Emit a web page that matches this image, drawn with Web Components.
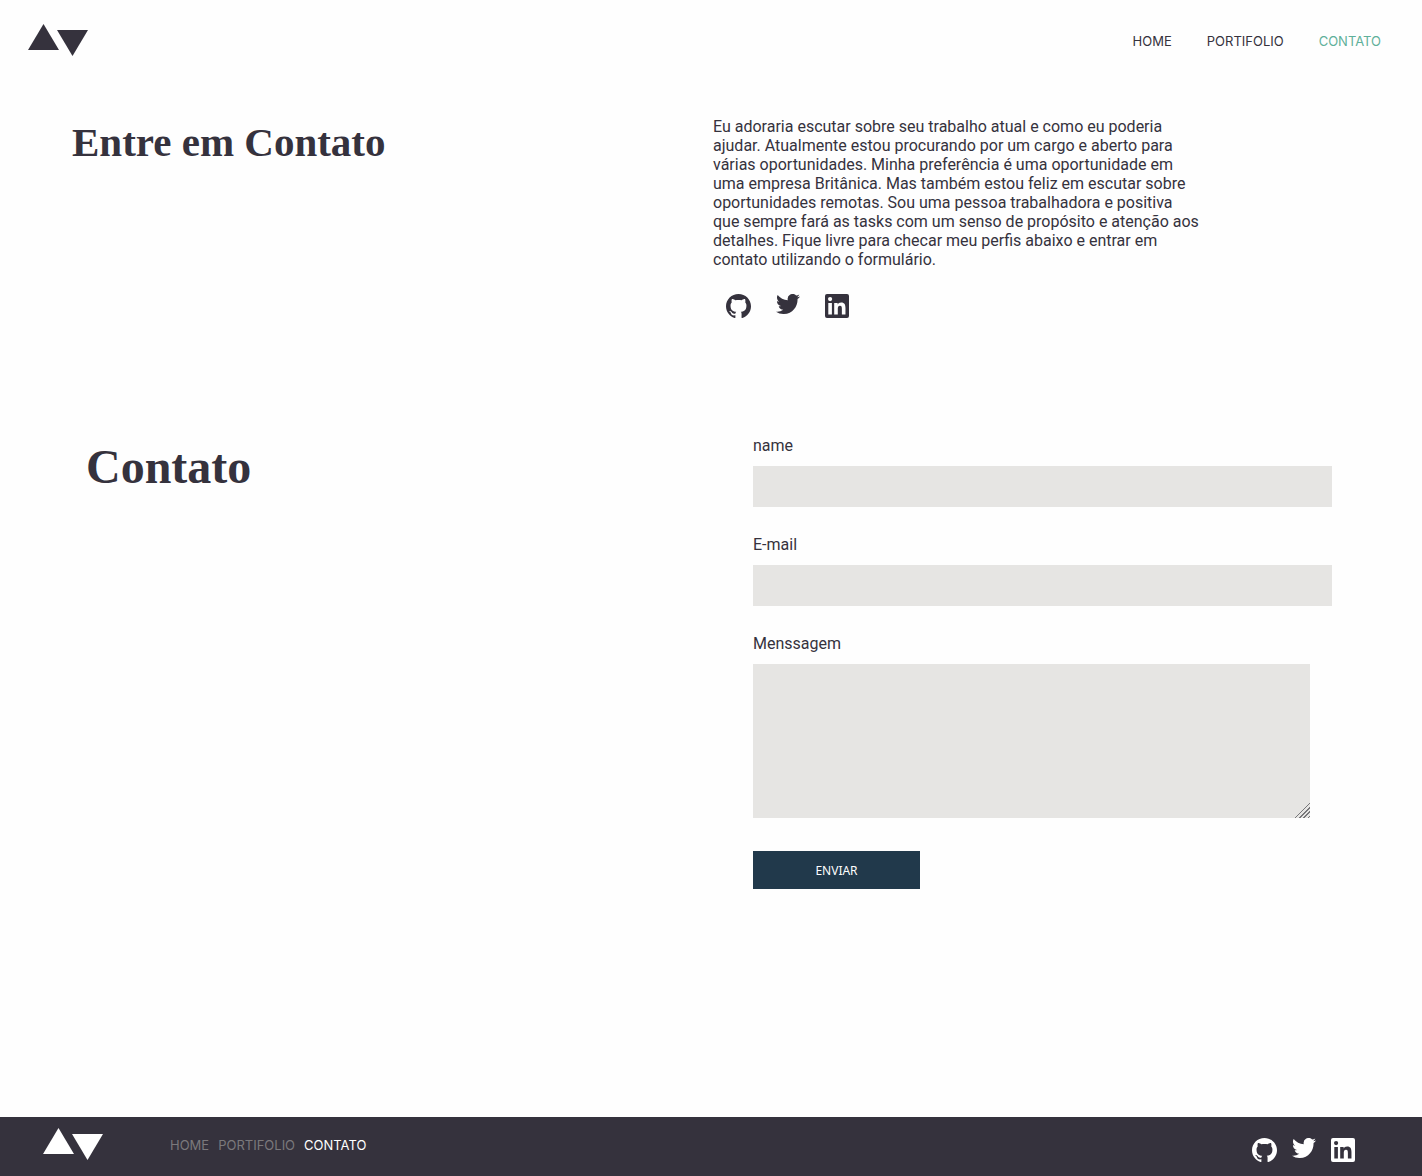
<!DOCTYPE html>
<html lang="pt-BR">
<head>
<meta charset="utf-8">
<meta name="viewport" content="width=device-width, initial-scale=1">
<title>Contato</title>
<style>
  :root {
    --ink: #35323d;
    --paper: #fefefe;
    --accent: #5fb09a;
    --field: #e6e5e3;
    --button: #21394b;
    --muted: #7b797c;
    --sans: Roboto, "Liberation Sans", sans-serif;
    --caps: Inter, "Liberation Sans", sans-serif;
    --serif: "Liberation Serif", serif;
  }
  body {
    margin: 0;
    background: var(--paper);
    color: var(--ink);
    font: 16px/19px var(--sans);
  }
</style>
</head>
<body>
<contact-page></contact-page>

<script>
  const define = (name, html, setup) => {
    const template = document.createElement('template');
    template.innerHTML = html;
    customElements.define(name, class extends HTMLElement {
      constructor() {
        super();
        this.attachShadow({ mode: 'open' }).append(template.content.cloneNode(true));
      }
      connectedCallback() {
        if (setup) setup(this, this.shadowRoot);
      }
    });
  };

  define('brand-logo', `
    <style>
      :host { display: block; }
      a { display: block; color: inherit; }
      svg { display: block; }
    </style>
    <a href="#" aria-label="Início">
      <svg width="60" height="32" viewBox="0 0 60 32" fill="currentColor" aria-hidden="true">
        <path d="M15.500 0 31 26H0z"/><path d="M29 6h31L44.500 32z"/>
      </svg>
    </a>`);

  define('nav-link', `
    <style>
      :host { display: block; }
      a { color: inherit; text-decoration: none; font: 13px/19px var(--caps); }
    </style>
    <a><slot></slot></a>`, (host, root) => {
      root.querySelector('a').href = host.getAttribute('href');
    });

  define('social-links', `
    <style>
      :host { display: block; }
      ul { display: flex; align-items: flex-start; gap: var(--social-gap, 25px); margin: 0; padding: 0; list-style: none; }
      a { display: block; color: inherit; }
      svg { display: block; }
    </style>
    <ul>
      <li><a href="#github" aria-label="GitHub">
        <svg width="25" height="24" viewBox="0 0.297 24 23.407" preserveAspectRatio="none" fill="currentColor" aria-hidden="true"><path d="M12 .297c-6.630 0-12 5.373-12 12 0 5.303 3.438 9.800 8.205 11.385.6.113.82-.258.82-.577 0-.285-.01-1.040-.015-2.040-3.338.724-4.042-1.610-4.042-1.610C4.422 18.070 3.633 17.700 3.633 17.700c-1.087-.744.084-.729.084-.729 1.205.084 1.838 1.236 1.838 1.236 1.070 1.835 2.809 1.305 3.495.998.108-.776.417-1.305.76-1.605-2.665-.3-5.466-1.332-5.466-5.930 0-1.310.465-2.380 1.235-3.220-.135-.303-.54-1.523.105-3.176 0 0 1.005-.322 3.300 1.230.96-.267 1.980-.399 3-.405 1.020.006 2.040.138 3 .405 2.280-1.552 3.285-1.230 3.285-1.230.645 1.653.24 2.873.12 3.176.765.84 1.230 1.910 1.230 3.220 0 4.610-2.805 5.625-5.475 5.920.42.36.81 1.096.81 2.220 0 1.606-.015 2.896-.015 3.286 0 .315.21.69.825.57C20.565 22.092 24 17.592 24 12.297c0-6.627-5.373-12-12-12"/></svg>
      </a></li>
      <li><a href="#twitter" aria-label="Twitter">
        <svg width="24" height="20" viewBox="0 2.250 24 19.500" preserveAspectRatio="none" fill="currentColor" aria-hidden="true"><path d="M23.953 4.570a10 10 0 01-2.825.775 4.958 4.958 0 002.163-2.723c-.951.555-2.005.959-3.127 1.184a4.920 4.920 0 00-8.384 4.482C7.690 8.095 4.067 6.130 1.640 3.162a4.822 4.822 0 00-.666 2.475c0 1.710.87 3.213 2.188 4.096a4.904 4.904 0 01-2.228-.616v.06a4.923 4.923 0 003.946 4.827 4.996 4.996 0 01-2.212.085 4.936 4.936 0 004.604 3.417 9.867 9.867 0 01-6.102 2.105c-.39 0-.779-.023-1.170-.067a13.995 13.995 0 007.557 2.209c9.053 0 13.998-7.496 13.998-13.985 0-.21 0-.42-.015-.63A9.935 9.935 0 0024 4.590z"/></svg>
      </a></li>
      <li><a href="#linkedin" aria-label="LinkedIn">
        <svg width="24" height="24" viewBox="0 0 24 24" fill="currentColor" aria-hidden="true"><path fill-rule="evenodd" d="M2 0h20a2 2 0 0 1 2 2v20a2 2 0 0 1-2 2H2a2 2 0 0 1-2-2V2a2 2 0 0 1 2-2zM3.300 8.900v11.700h3.600V8.900zM5.100 3a2.100 2.100 0 1 0 0 4.200 2.100 2.100 0 0 0 0-4.200zM9.200 8.900v11.700h3.600v-5.800c0-1.530.3-3 2.180-3 1.870 0 1.890 1.730 1.890 3.100v5.700h3.600v-6.420c0-3.150-.68-5.580-4.350-5.580-1.770 0-2.950.97-3.430 1.890h-.05V8.900z"/></svg>
      </a></li>
    </ul>`);

  define('site-header', `
    <style>
      :host { display: block; }
      header { display: flex; justify-content: space-between; align-items: center; padding: 24px 41px 24px 28px; }
      nav { display: flex; gap: 35px; padding-top: 2px; }
      .current { color: var(--accent); }
    </style>
    <header>
      <brand-logo></brand-logo>
      <nav aria-label="Principal">
        <nav-link href="#home">HOME</nav-link>
        <nav-link href="#portifolio">PORTIFOLIO</nav-link>
        <nav-link href="#contato" class="current">CONTATO</nav-link>
      </nav>
    </header>`);

  define('intro-section', `
    <style>
      :host { display: block; }
      section { display: grid; grid-template-columns: 1fr 1fr; gap: 4px; padding: 37px 72px 0; }
      h1 { margin: 0; font: bold 41px/50px var(--serif); }
      p { margin: 0 0 25px; }
      social-links { padding-left: 13px; }
    </style>
    <section>
      <h1><slot name="title"></slot></h1>
      <div>
        <p><slot></slot></p>
        <social-links></social-links>
      </div>
    </section>`);

  define('form-field', `
    <style>
      :host { display: block; }
      label { display: block; margin-bottom: 11px; }
      input, textarea {
        display: block; box-sizing: border-box; width: 100%; height: 41px; margin: 0; padding: 8px 12px;
        border: 0; border-radius: 0; background: var(--field); color: var(--ink); font: 16px/19px var(--sans);
      }
      textarea { width: calc(100% - 22px); height: 154px; resize: both; }
      textarea::-webkit-resizer {
        background:
          linear-gradient(135deg, var(--field) calc(50% - 1px), transparent calc(50% - 1px)),
          repeating-linear-gradient(315deg, var(--field) 0 1px, #77777a 1px 2px, var(--field) 2px 3px);
      }
    </style>
    <label for="control"></label>`, (host, root) => {
      if (root.getElementById('control')) return;
      const type = host.getAttribute('type');
      const control = document.createElement(type === 'textarea' ? 'textarea' : 'input');
      if (type !== 'textarea') control.type = type;
      control.id = 'control';
      control.name = host.getAttribute('name');
      root.querySelector('label').textContent = host.getAttribute('label');
      root.append(control);
    });

  define('contact-form', `
    <style>
      :host { display: block; }
      form { display: flex; flex-direction: column; gap: 28px; }
      button {
        align-self: flex-start; width: 167px; height: 38px; margin-top: 5px; padding: 0; border: 0;
        background: var(--button); color: var(--paper); font: 12px/19px "Noto Sans", sans-serif;
      }
    </style>
    <form>
      <form-field label="name" name="name" type="text"></form-field>
      <form-field label="E-mail" name="email" type="email"></form-field>
      <form-field label="Menssagem" name="message" type="textarea"></form-field>
      <button type="submit">ENVIAR</button>
    </form>`);

  define('contact-section', `
    <style>
      :host { display: block; }
      section { display: grid; grid-template-columns: 1fr 1fr; gap: 88px; padding: 118px 90px 0 86px; }
      h2 { margin: 0; font: bold 48px/62px var(--serif); }
    </style>
    <section>
      <h2><slot name="title"></slot></h2>
      <contact-form></contact-form>
    </section>`);

  define('site-footer', `
    <style>
      :host { display: block; background: var(--ink); color: #fff; }
      footer { display: flex; align-items: flex-start; padding: 11px 67px 14px 43px; }
      nav { display: flex; gap: 9px; margin-left: 67px; padding-top: 7px; color: var(--muted); }
      .current { color: #fff; }
      social-links { --social-gap: 15px; margin-left: auto; padding-top: 10px; }
    </style>
    <footer>
      <brand-logo></brand-logo>
      <nav aria-label="Rodapé">
        <nav-link href="#home">HOME</nav-link>
        <nav-link href="#portifolio">PORTIFOLIO</nav-link>
        <nav-link href="#contato" class="current">CONTATO</nav-link>
      </nav>
      <social-links></social-links>
    </footer>`);

  define('contact-page', `
    <style>
      :host { display: flex; flex-direction: column; min-height: 100vh; }
      main { flex: 1; padding-bottom: 60px; }
    </style>
    <site-header></site-header>
    <main>
      <intro-section>
        <span slot="title">Entre em Contato</span>
        Eu adoraria escutar sobre seu trabalho atual e como eu poderia<br>
        ajudar. Atualmente estou procurando por um cargo e aberto para<br>
        várias oportunidades. Minha preferência é uma oportunidade em<br>
        uma empresa Britânica. Mas também estou feliz em escutar sobre<br>
        oportunidades remotas. Sou uma pessoa trabalhadora e positiva<br>
        que sempre fará as tasks com um senso de propósito e atenção aos<br>
        detalhes. Fique livre para checar meu perfis abaixo e entrar em<br>
        contato utilizando o formulário.
      </intro-section>
      <contact-section>
        <span slot="title">Contato</span>
      </contact-section>
    </main>
    <site-footer></site-footer>`);
</script>
</body>
</html>
